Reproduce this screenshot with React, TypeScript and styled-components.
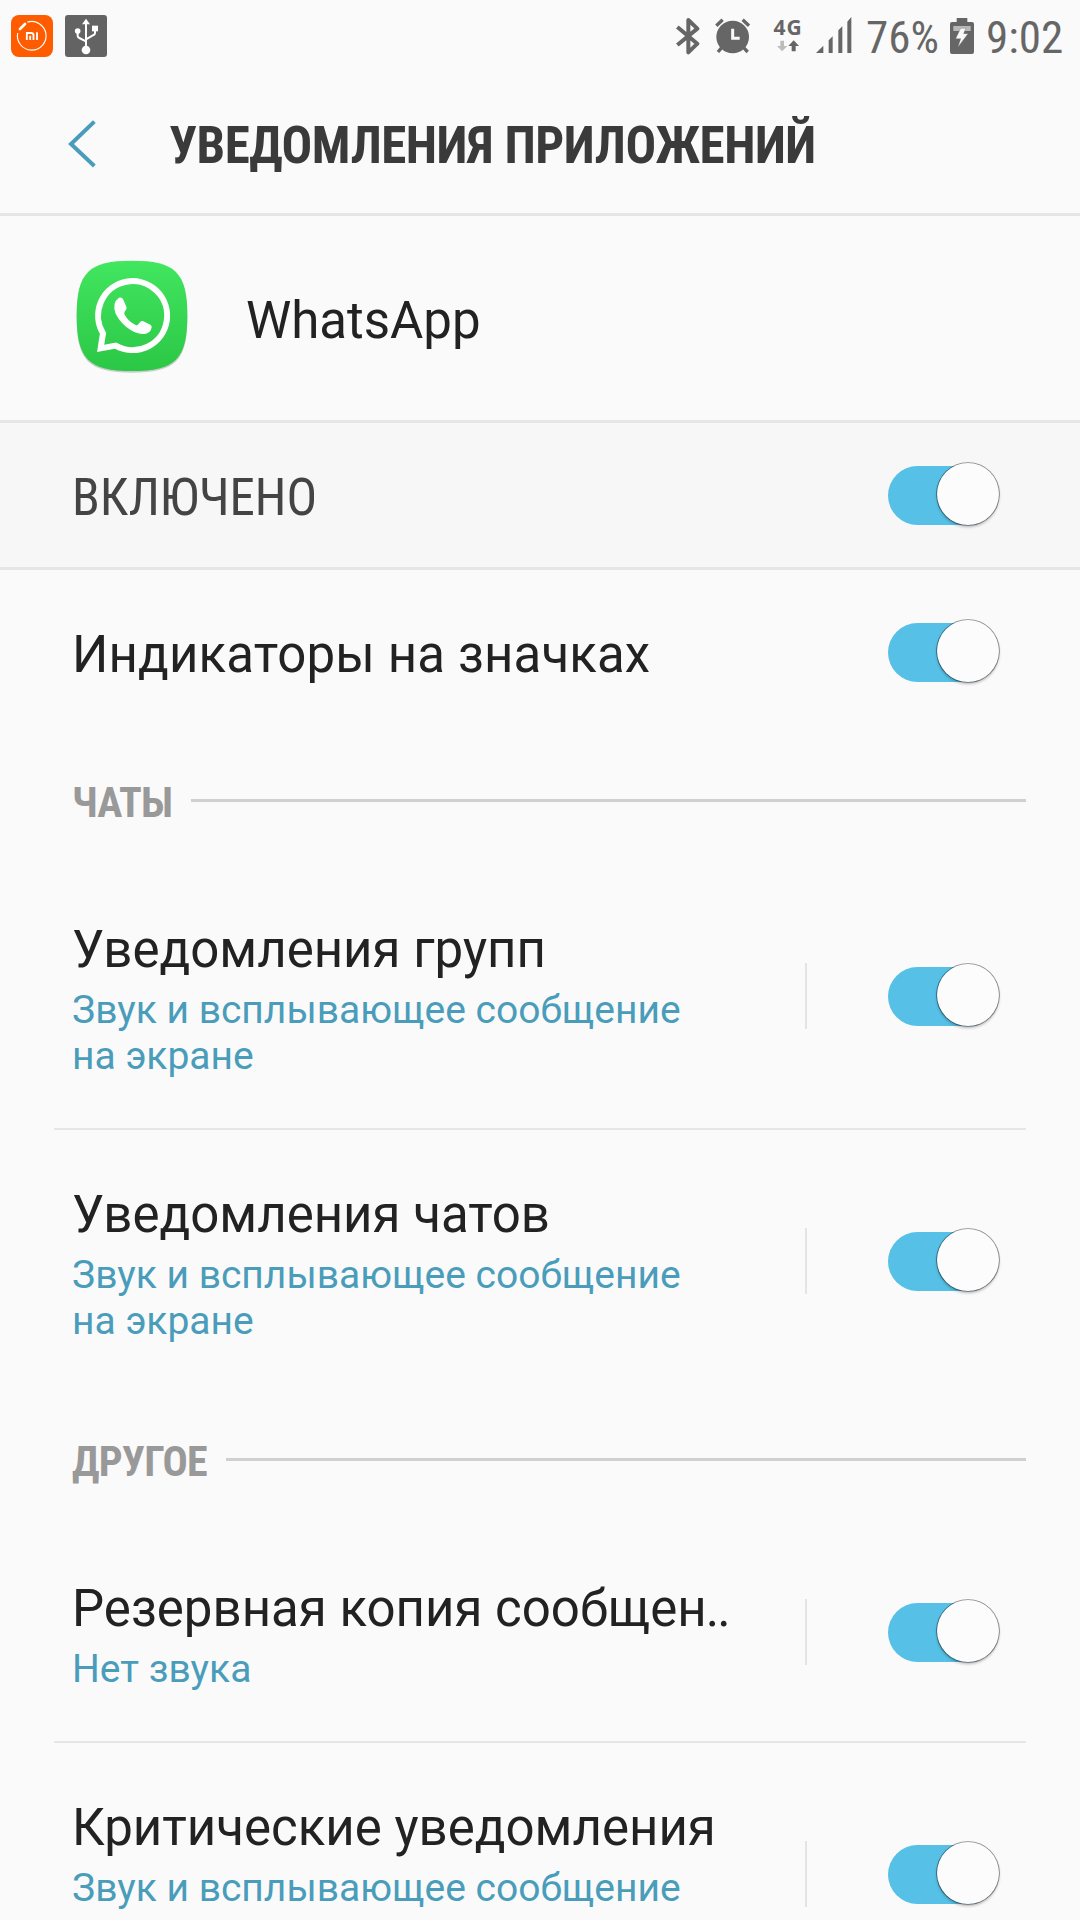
import React from "react";
import styled, { createGlobalStyle } from "styled-components";

const GlobalStyle = createGlobalStyle`
  * { box-sizing: border-box; }
  html, body { margin: 0; padding: 0; background: #fafafa; }
  body { font-family: Roboto, "Noto Sans", sans-serif; overflow: hidden; }
  svg { display: block; flex: none; }
`;

const condensed = `"Roboto Condensed", Roboto, "Noto Sans", sans-serif`;

const Screen = styled.main`
  display: flex;
  flex-direction: column;
  width: 1080px;
  height: 1920px;
  overflow: hidden;
  background: #fafafa;
  color: #222;
`;

const StatusBar = styled.div`
  display: flex;
  flex: none;
  justify-content: space-between;
  height: 72px;
  padding: 15px 18px 0 11px;
`;

const StatusGroup = styled.div`
  display: flex;
  align-items: flex-start;
`;

const StatusSlot = styled.div<{ $left: number; $top?: number }>`
  flex: none;
  margin-left: ${(p) => p.$left}px;
  margin-top: ${(p) => p.$top ?? 0}px;
`;

const StatusText = styled.div<{ $left: number; $width: number }>`
  flex: none;
  width: ${(p) => p.$width}px;
  margin-left: ${(p) => p.$left}px;
  margin-top: -3px;
  color: #666;
  font: 400 45px/52px ${condensed};
  font-stretch: 75%;
  white-space: nowrap;
`;

const Network = styled.div`
  display: flex;
  flex-direction: column;
  align-items: center;
  gap: 3px;
  width: 30px;
  color: #666;
  font: 700 21px/20px "Open Sans", "Noto Sans", sans-serif;
  letter-spacing: 1px;
`;

const Header = styled.header`
  display: flex;
  flex: none;
  align-items: center;
  height: 144px;
  padding: 3px 0 0 68px;
  border-bottom: 3px solid #e6e6e6;
`;

const HeaderTitle = styled.h1`
  margin: 4px 0 0 73px;
  color: #3a3a3a;
  font: 700 51px/60px ${condensed};
  font-stretch: 75%;
  letter-spacing: -0.5px;
  white-space: nowrap;
`;

const AppRow = styled.section`
  display: flex;
  flex: none;
  align-items: center;
  height: 207px;
  padding: 0 0 2px 76px;
  border-bottom: 3px solid #e6e6e6;
`;

const AppName = styled.span`
  margin: 7px 0 0 58px;
  font-size: 51px;
  line-height: 60px;
`;

const MasterRow = styled.section`
  display: flex;
  flex: none;
  align-items: center;
  justify-content: space-between;
  height: 147px;
  padding: 1px 80px 0 72px;
  background: #f7f7f7;
  border-bottom: 3px solid #e6e6e6;
`;

const MasterLabel = styled.span`
  margin-top: 4px;
  color: #444;
  font: 400 51px/60px ${condensed};
  font-stretch: 75%;
`;

const BadgeRow = styled.section`
  display: flex;
  flex: none;
  align-items: center;
  justify-content: space-between;
  height: 164px;
  padding: 1px 80px 0 72px;
`;

const SectionHead = styled.div`
  display: flex;
  flex: none;
  align-items: center;
  height: 131px;
  padding: 2px 54px 0 72px;
`;

const SectionTitle = styled.h2<{ $width: number }>`
  flex: none;
  width: ${(p) => p.$width}px;
  margin: 4px 0 0;
  color: #999;
  font: 700 42px/48px ${condensed};
  font-stretch: 75%;
  letter-spacing: -0.8px;
  white-space: nowrap;
`;

const SectionRule = styled.div`
  flex: 1;
  height: 3px;
  background: #d0d0d0;
`;

const Item = styled.section<{ $height: number }>`
  display: flex;
  flex: none;
  align-items: center;
  height: ${(p) => p.$height}px;
  padding: 0 80px 0 72px;
`;

const ItemText = styled.div`
  flex: none;
  width: 733px;
  padding-top: 6px;
`;

const ItemTitle = styled.div`
  font-size: 51px;
  line-height: 60px;
  white-space: nowrap;
`;

const BadgeTitle = styled(ItemTitle)`
  margin-top: 4px;
  letter-spacing: 0.13px;
`;

const Dots = styled.span`
  margin-left: -1px;
  letter-spacing: -2px;
`;

const ItemSub = styled.div<{ $lines: number }>`
  width: 640px;
  min-height: ${(p) => p.$lines * 46}px;
  margin-top: 7px;
  color: #4a9dba;
  font-size: 39px;
  line-height: 46px;
`;

const ItemSplit = styled.div`
  flex: none;
  width: 2px;
  height: 66px;
  margin: 0 81px 1px 0;
  background: #e4e4e4;
`;

const Divider = styled.hr`
  flex: none;
  width: 972px;
  height: 2px;
  margin: 0 54px;
  border: 0;
  background: #e6e6e6;
`;

const Track = styled.button`
  display: flex;
  flex: none;
  justify-content: flex-end;
  align-items: center;
  width: 112px;
  height: 59px;
  padding: 0 1px 3px 0;
  border: 0;
  border-radius: 30px;
  background: linear-gradient(90deg, #56c0e6 90px, transparent 90px);
`;

const Thumb = styled.span`
  flex: none;
  width: 62px;
  height: 62px;
  border-radius: 50%;
  background: #fcfcfc;
  box-shadow: 0 0 0 0.8px rgba(0, 0, 0, 0.45), 0 2px 3px rgba(0, 0, 0, 0.28);
`;

const Toggle = () => (
  <Track role="switch" aria-checked="true">
    <Thumb />
  </Track>
);

const MiIcon = () => (
  <svg width="42" height="42" viewBox="0 0 126 126">
    <rect width="126" height="126" rx="24" fill="#ff5c00" />
    <path d="M49 21.500A43 43 0 1 1 20 54" fill="none" stroke="#fff" strokeWidth="3.500" />
    <path d="M27 42L42 27" stroke="#fff" strokeWidth="8" strokeLinecap="round" />
    <path d="M47.500 75V54H60Q67.500 54 67.500 61V75M57.500 62V75M78 52V75" fill="none" stroke="#fff" strokeWidth="5.500" />
  </svg>
);

const UsbIcon = () => (
  <svg width="42" height="42" viewBox="0 0 126 126">
    <rect width="126" height="126" rx="9" fill="#636363" />
    <g fill="none" stroke="#fff" strokeWidth="6">
      <path d="M63 24V100M38 50V62Q38 67 43 69L63 79M90 42V54Q90 58 86 60L63 73" />
    </g>
    <g fill="#fff">
      <path d="M63 11L75 28H51Z" />
      <circle cx="63" cy="105" r="13" />
      <circle cx="38" cy="48" r="8.500" />
      <rect x="81" y="32" width="18" height="17" />
    </g>
  </svg>
);

const BluetoothIcon = () => (
  <svg width="24" height="39" viewBox="0 0 72 117">
    <path d="M4 30L64 80L37 106V9L64 35L4 84" fill="none" stroke="#666" strokeWidth="12" strokeLinejoin="round" />
  </svg>
);

const AlarmIcon = () => (
  <svg width="36" height="37" viewBox="0 0 108 111">
    <circle cx="53" cy="60" r="49" fill="#666" />
    <g stroke="#666" strokeWidth="10">
      <path d="M4 26L23 8M83 8L102 26" />
      <path d="M20 92L9 105M86 92L98 105" />
    </g>
    <path d="M53 35V64H74" fill="none" stroke="#fafafa" strokeWidth="9" />
  </svg>
);

const DataArrows = () => (
  <svg width="22" height="12" viewBox="0 0 66 36">
    <path d="M10 2H21V18H31L15.500 34L0 18H10Z" fill="#bdbdbd" />
    <path d="M44 34H56V18H66L50 1L34 18H44Z" fill="#666" />
  </svg>
);

const SignalIcon = () => (
  <svg width="36" height="36" viewBox="0 0 108 108">
    <path d="M0 108L22 86V108ZM38 108V70L50 58V108ZM67 108V40L79 28V108ZM94 108V14L106 0V108Z" fill="#666" />
  </svg>
);

const BatteryIcon = () => (
  <svg width="24" height="36" viewBox="0 0 72 108">
    <path d="M20 0H52V12H66Q72 12 72 18V102Q72 108 66 108H6Q0 108 0 102V18Q0 12 6 12H20Z" fill="#666" />
    <rect x="10" y="24" width="52" height="15" fill="#b8b8b8" />
    <path d="M32 31H47L41 47H54L24 87L32 62H17Z" fill="#fafafa" stroke="#666" strokeWidth="1" />
  </svg>
);

const BackIcon = () => (
  <svg width="28" height="48" viewBox="0 0 84 144">
    <path d="M79 5L9 72L79 138" fill="none" stroke="#4a9dba" strokeWidth="12" />
  </svg>
);

const WhatsAppIcon = () => (
  <svg width="112" height="114" viewBox="48 60 336 342">
    <defs>
      <linearGradient id="wa" x1="0" y1="0" x2="0" y2="1">
        <stop offset="0" stopColor="#42e65f" />
        <stop offset="1" stopColor="#2bc746" />
      </linearGradient>
    </defs>
    <path d="M216 67C346 67 382 100 382 232C382 364 346 398 216 398C86 398 50 364 50 232C50 100 86 67 216 67Z" fill="#8a9a8c" opacity="0.450" />
    <path d="M216 62C346 62 382 97 382 227C382 357 346 393 216 393C86 393 50 357 50 227C50 97 86 62 216 62Z" fill="url(#wa)" />
    <path d="M122 325L129 280A103.500 103.500 0 1 1 167 317Z" fill="none" stroke="#fff" strokeWidth="18" strokeMiterlimit="8" />
    <path d="M177 173Q186 170 190 179L199 200Q201 206 197 211Q190 218 193 223Q205 245 228 256Q233 257 240 247Q244 241 250 244L271 254Q276 257 275 262Q272 278 258 281Q240 286 213 271Q182 251 167 221Q155 188 177 173Z" fill="#fff" />
  </svg>
);

interface Channel {
  title: string;
  truncated?: boolean;
  sub: string;
  lines: number;
  height: number;
}

const chats: Channel[] = [
  { title: "Уведомления групп", sub: "Звук и всплывающее сообщение на экране", lines: 2, height: 263 },
  { title: "Уведомления чатов", sub: "Звук и всплывающее сообщение на экране", lines: 2, height: 263 },
];

const other: Channel[] = [
  { title: "Резервная копия сообщен", truncated: true, sub: "Нет звука", lines: 1, height: 217 },
  { title: "Критические уведомления", sub: "Звук и всплывающее сообщение", lines: 2, height: 263 },
];

const ChannelList = ({ items }: { items: Channel[] }) => (
  <>
    {items.map((c, i) => (
      <React.Fragment key={c.title}>
        {i > 0 && <Divider />}
        <Item $height={c.height}>
          <ItemText>
            <ItemTitle>
              {c.title}
              {c.truncated && <Dots>..</Dots>}
            </ItemTitle>
            <ItemSub $lines={c.lines}>{c.sub}</ItemSub>
          </ItemText>
          <ItemSplit />
          <Toggle />
        </Item>
      </React.Fragment>
    ))}
  </>
);

export default function App() {
  return (
    <>
      <GlobalStyle />
      <Screen>
        <StatusBar>
          <StatusGroup>
            <StatusSlot $left={0}><MiIcon /></StatusSlot>
            <StatusSlot $left={12}><UsbIcon /></StatusSlot>
          </StatusGroup>
          <StatusGroup>
            <StatusSlot $left={0} $top={2}><BluetoothIcon /></StatusSlot>
            <StatusSlot $left={15} $top={2}><AlarmIcon /></StatusSlot>
            <StatusSlot $left={22} $top={2}>
              <Network>
                <span>4G</span>
                <DataArrows />
              </Network>
            </StatusSlot>
            <StatusSlot $left={13} $top={2}><SignalIcon /></StatusSlot>
            <StatusText $left={14} $width={72}>76%</StatusText>
            <StatusSlot $left={12} $top={3}><BatteryIcon /></StatusSlot>
            <StatusText $left={12} $width={76}>9:02</StatusText>
          </StatusGroup>
        </StatusBar>
        <Header>
          <BackIcon />
          <HeaderTitle>УВЕДОМЛЕНИЯ ПРИЛОЖЕНИЙ</HeaderTitle>
        </Header>
        <AppRow>
          <WhatsAppIcon />
          <AppName>WhatsApp</AppName>
        </AppRow>
        <MasterRow>
          <MasterLabel>ВКЛЮЧЕНО</MasterLabel>
          <Toggle />
        </MasterRow>
        <BadgeRow>
          <BadgeTitle>Индикаторы на значках</BadgeTitle>
          <Toggle />
        </BadgeRow>
        <SectionHead>
          <SectionTitle $width={119}>ЧАТЫ</SectionTitle>
          <SectionRule />
        </SectionHead>
        <ChannelList items={chats} />
        <SectionHead>
          <SectionTitle $width={154}>ДРУГОЕ</SectionTitle>
          <SectionRule />
        </SectionHead>
        <ChannelList items={other} />
      </Screen>
    </>
  );
}
